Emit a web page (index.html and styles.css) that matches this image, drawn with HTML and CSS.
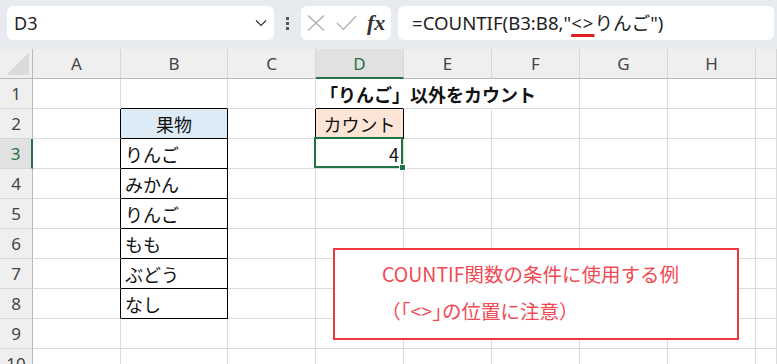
FILE: index.html
```html
<!DOCTYPE html>
<html lang="ja">
<head>
    <meta charset="UTF-8">
    <title>COUNTIF - りんご以外をカウント</title>
    <link rel="stylesheet" href="styles.css">
</head>
<body>
    <!-- 名前ボックスと数式バー -->
    <div class="toolbar">
        <div class="namebox">
            <span class="name">D3</span>
            <svg class="chev" width="12" height="8" viewBox="0 0 12 8"><path d="M1 1.5 L6 6.5 L11 1.5" fill="none" stroke="#333" stroke-width="1.2"/></svg>
        </div>
        <div class="more"><i></i><i></i><i></i></div>
        <div class="fxbox">
            <svg width="18" height="16" viewBox="0 0 18 16"><path d="M1 0.5 L17 15.5 M17 0.5 L1 15.5" stroke="#aaa" stroke-width="1.2" fill="none"/></svg>
            <svg width="21" height="16" viewBox="0 0 21 16"><path d="M1 8 L7.5 14.5 L20 1" stroke="#aaa" stroke-width="1.2" fill="none"/></svg>
            <span class="fx">fx</span>
        </div>
        <div class="formula">=COUNTIF(B3:B8,"<span class="mark">&lt;&gt;</span>りんご")</div>
    </div>

    <!-- シート -->
    <div class="sheet">
        <div class="corner"></div>
        <div class="ch">A</div>
        <div class="ch">B</div>
        <div class="ch">C</div>
        <div class="ch sel">D</div>
        <div class="ch">E</div>
        <div class="ch">F</div>
        <div class="ch">G</div>
        <div class="ch">H</div>
        <div class="ch"></div>

        <div class="rh">1</div>
        <div class="c"></div>
        <div class="c kb"></div>
        <div class="c"></div>
        <div class="c nr kb title">「りんご」以外をカウント</div>
        <div class="c nr"></div>
        <div class="c"></div>
        <div class="c"></div>
        <div class="c"></div>
        <div class="c"></div>

        <div class="rh">2</div>
        <div class="c kr"></div>
        <div class="c kr kb blue center">果物</div>
        <div class="c kr"></div>
        <div class="c kr kb peach center">カウント</div>
        <div class="c"></div>
        <div class="c"></div>
        <div class="c"></div>
        <div class="c"></div>
        <div class="c"></div>

        <div class="rh sel">3</div>
        <div class="c kr"></div>
        <div class="c kr kb">りんご</div>
        <div class="c"></div>
        <div class="c active right">4</div>
        <div class="c"></div>
        <div class="c"></div>
        <div class="c"></div>
        <div class="c"></div>
        <div class="c"></div>

        <div class="rh">4</div>
        <div class="c kr"></div>
        <div class="c kr kb">みかん</div>
        <div class="c"></div>
        <div class="c"></div>
        <div class="c"></div>
        <div class="c"></div>
        <div class="c"></div>
        <div class="c"></div>
        <div class="c"></div>

        <div class="rh">5</div>
        <div class="c kr"></div>
        <div class="c kr kb">りんご</div>
        <div class="c"></div>
        <div class="c"></div>
        <div class="c"></div>
        <div class="c"></div>
        <div class="c"></div>
        <div class="c"></div>
        <div class="c"></div>

        <div class="rh">6</div>
        <div class="c kr"></div>
        <div class="c kr kb">もも</div>
        <div class="c"></div>
        <div class="c"></div>
        <div class="c"></div>
        <div class="c"></div>
        <div class="c"></div>
        <div class="c"></div>
        <div class="c"></div>

        <div class="rh">7</div>
        <div class="c kr"></div>
        <div class="c kr kb">ぶどう</div>
        <div class="c"></div>
        <div class="c"></div>
        <div class="c"></div>
        <div class="c"></div>
        <div class="c"></div>
        <div class="c"></div>
        <div class="c"></div>

        <div class="rh">8</div>
        <div class="c kr"></div>
        <div class="c kr kb">なし</div>
        <div class="c"></div>
        <div class="c"></div>
        <div class="c"></div>
        <div class="c"></div>
        <div class="c"></div>
        <div class="c"></div>
        <div class="c"></div>

        <div class="rh">9</div>
        <div class="c"></div>
        <div class="c"></div>
        <div class="c"></div>
        <div class="c"></div>
        <div class="c"></div>
        <div class="c"></div>
        <div class="c"></div>
        <div class="c"></div>
        <div class="c"></div>

        <div class="rh">10</div>
        <div class="c"></div>
        <div class="c"></div>
        <div class="c"></div>
        <div class="c"></div>
        <div class="c"></div>
        <div class="c"></div>
        <div class="c"></div>
        <div class="c"></div>
        <div class="c"></div>

        <!-- テキストボックス -->
        <div class="note">
            <p>COUNTIF関数の条件に使用する例</p>
            <p class="sub">（「&lt;&gt;」の位置に注意）</p>
        </div>
    </div>
</body>
</html>
```

FILE: styles.css
```css
body {
    margin: 0;
    background: #fff;
    overflow: hidden;
    font-family: "Noto Sans", "Noto Sans CJK JP", sans-serif;
}

/* 上部のバー */
.toolbar {
    display: flex;
    align-items: flex-start;
    height: 49px;
    padding: 6px 3px 0 7px;
    box-sizing: border-box;
    background: #e7eaef;
}
.namebox {
    width: 267px;
    height: 34px;
    background: #fff;
    border-radius: 6px;
    display: flex;
    align-items: center;
    justify-content: space-between;
    padding: 0 7px;
    box-sizing: border-box;
}
.name {
    font-size: 18px;
    color: #222;
}
.more {
    width: 3px;
    height: 34px;
    margin: 0 12px;
    display: flex;
    flex-direction: column;
    justify-content: center;
    gap: 2px;
}
.more i {
    width: 3px;
    height: 3px;
    background: #555;
}
.fxbox {
    width: 90px;
    height: 34px;
    background: #fff;
    border-radius: 6px;
    display: flex;
    align-items: center;
    padding-left: 6px;
    gap: 11px;
    box-sizing: border-box;
}
.fx {
    font-family: "Liberation Serif", serif;
    font-style: italic;
    font-weight: bold;
    font-size: 22px;
    color: #333;
    margin-left: -1px;
}
.formula {
    flex: 1;
    height: 34px;
    margin-left: 7px;
    background: #fff;
    border-radius: 6px;
    padding-left: 14px;
    font-size: 18.6px;
    line-height: 34px;
    color: #222;
    white-space: nowrap;
}
.mark {
    text-decoration: underline 3px #e0201e;
    text-underline-offset: 4px;
    letter-spacing: 1px;
}

/* シート */
.sheet {
    position: relative;
    display: grid;
    grid-template-columns: 33px 88px 107px 88px 88px 88px 88px 88px 88px 1fr;
    grid-auto-rows: 30px;
    font-family: "Noto Sans CJK JP", sans-serif;
    font-size: 18px;
}
.corner, .ch, .rh, .c {
    box-sizing: border-box;
    display: flex;
    align-items: center;
    white-space: nowrap;
}
.corner {
    background: #efefef linear-gradient(to top left, #dadada 50%, transparent 50%) no-repeat right 3px bottom 3px / 22px 22px;
    border-right: 1px solid #b9b9b9;
    border-bottom: 1px solid #b9b9b9;
}
.ch {
    justify-content: center;
    background: #efefef;
    border-right: 1px solid #d6d6d6;
    border-bottom: 1px solid #b9b9b9;
    font-family: "Noto Sans", sans-serif;
    font-size: 17px;
    color: #444;
}
.ch.sel {
    background: #e1e1e1;
    color: #217346;
    border-bottom: 2px solid #217346;
}
.rh {
    justify-content: center;
    background: #efefef;
    border-right: 1px solid #b9b9b9;
    border-bottom: 1px solid #d6d6d6;
    font-family: "Noto Sans", sans-serif;
    font-size: 17px;
    color: #444;
}
.rh.sel {
    background: #e1e1e1;
    color: #217346;
    border-right: 2px solid #217346;
}
.c {
    border-right: 1px solid #dcdcdc;
    border-bottom: 1px solid #dcdcdc;
    padding: 0 4px;
    color: #111;
}
.c.nr { border-right-color: transparent; }
.c.kr { border-right-color: #000; }
.c.kb { border-bottom-color: #000; }
.center { justify-content: center; }
.right { justify-content: flex-end; }
.title { font-weight: bold; }
.blue { background: #ddebf7; }
.peach { background: #fce4d6; }

.active {
    position: relative;
}
.active::after {
    content: "";
    position: absolute;
    left: -2px;
    top: -2px;
    right: 0;
    bottom: 0;
    border: 2px solid #217346;
}
.active::before {
    content: "";
    position: absolute;
    right: -3px;
    bottom: -3px;
    width: 5px;
    height: 5px;
    background: #217346;
    border: 1px solid #fff;
    z-index: 1;
}

.note {
    position: absolute;
    left: 333px;
    top: 199px;
    width: 406px;
    height: 92px;
    box-sizing: border-box;
    border: 2px solid #ee3840;
    background: #fff;
    padding: 5px 0 0 47px;
    font-family: "Noto Sans CJK JP", sans-serif;
    font-size: 19.5px;
    line-height: 37px;
    color: #f24a55;
}
.note p {
    margin: 0;
    white-space: nowrap;
}
.note .sub {
    padding-left: 9px;
    font-feature-settings: "halt";
}
```
